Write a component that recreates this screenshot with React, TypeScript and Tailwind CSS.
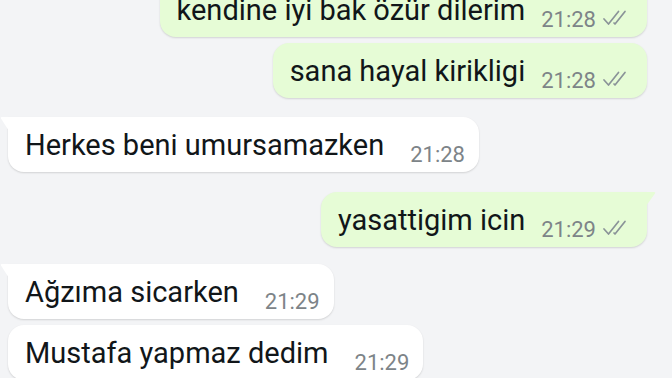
import React from "react";

type Msg = { text: string; time: string; out: boolean; tail?: boolean; gap: number };

const msgs: Msg[] = [
  { text: "kendine iyi bak özür dilerim", time: "21:28", out: true, gap: 0 },
  { text: "sana hayal kirikligi", time: "21:28", out: true, gap: 6 },
  { text: "Herkes beni umursamazken", time: "21:28", out: false, tail: true, gap: 19 },
  { text: "yasattigim icin", time: "21:29", out: true, tail: true, gap: 20 },
  { text: "Ağzıma sicarken", time: "21:29", out: false, tail: true, gap: 17 },
  { text: "Mustafa yapmaz dedim", time: "21:29", out: false, gap: 6 },
];

function Checks() {
  return (
    <svg width="26" height="16" viewBox="0 0 26 16" className="ml-[6px] mb-[7px] shrink-0">
      <path d="M2 9 L6.5 14 L16.5 1.5" fill="none" stroke="#8a9398" strokeWidth="1.7" strokeLinecap="round" strokeLinejoin="round" />
      <path d="M12 13 L13 14 L23 1.5" fill="none" stroke="#8a9398" strokeWidth="1.7" strokeLinecap="round" strokeLinejoin="round" />
    </svg>
  );
}

function Bubble({ m }: { m: Msg }) {
  const base =
    "relative flex items-end h-[55px] pl-[17px] pt-[11px] pb-[10px] rounded-[16px] shadow-[0_1px_2px_rgba(0,0,0,0.14)]";
  const cls = m.out
    ? `${base} bg-[#e6fcd6] pr-[19px] ${m.tail ? "rounded-tr-none" : ""}`
    : `${base} bg-white pr-[14px] ${m.tail ? "rounded-tl-none" : ""}`;
  return (
    <div className={cls}>
      {m.tail && !m.out && (
        <svg width="9" height="15" viewBox="0 0 9 15" className="absolute left-[-8px] top-0">
          <path d="M9 0 H1.8 Q0 0 1 1.6 L9 14 Z" fill="#ffffff" />
        </svg>
      )}
      {m.tail && m.out && (
        <svg width="10" height="15" viewBox="0 0 10 15" className="absolute right-[-9px] top-0">
          <path d="M0 0 H8.2 Q10 0 9 1.6 L0 14 Z" fill="#e6fcd6" />
        </svg>
      )}
      <span className="text-[29px] leading-[34px] text-[#111619] whitespace-nowrap">{m.text}</span>
      <span className={`flex items-end -mb-[6px] ${m.out ? "ml-[16px]" : "ml-[26px]"}`}>
        <span className="text-[22px] leading-[26px] text-[#7d8488] whitespace-nowrap">{m.time}</span>
        {m.out && <Checks />}
      </span>
    </div>
  );
}

export default function App() {
  return (
    <div className="w-[672px] h-[378px] overflow-hidden bg-[#f3f4f6] font-['Roboto',sans-serif]">
      <div className="flex flex-col -mt-[18px]">
        {msgs.map((m, i) => (
          <div
            key={i}
            className={m.out ? "flex justify-end pr-[25px]" : "flex justify-start pl-[8px]"}
            style={{ marginTop: m.gap }}
          >
            <Bubble m={m} />
          </div>
        ))}
      </div>
    </div>
  );
}
